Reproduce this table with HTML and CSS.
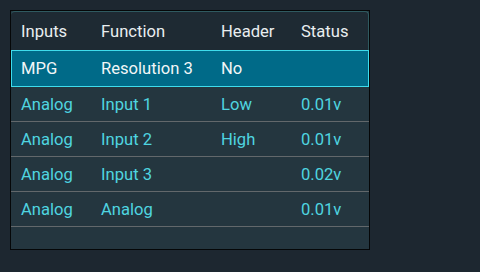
FILE: index.html
```html
<!DOCTYPE html>
<html lang="en">
<head>
    <meta charset="UTF-8">
    <meta name="viewport" content="width=device-width, initial-scale=1.0">
    <title>Inputs</title>
    <link rel="stylesheet" href="styles.css">
</head>
<body>

    <div class="panel">
        <div class="row head">
            <span>Inputs</span>
            <span>Function</span>
            <span>Header</span>
            <span>Status</span>
        </div>
        <div class="row selected">
            <span>MPG</span>
            <span>Resolution 3</span>
            <span>No</span>
            <span></span>
        </div>
        <div class="row">
            <span>Analog</span>
            <span>Input 1</span>
            <span>Low</span>
            <span>0.01v</span>
        </div>
        <div class="row">
            <span>Analog</span>
            <span>Input 2</span>
            <span>High</span>
            <span>0.01v</span>
        </div>
        <div class="row">
            <span>Analog</span>
            <span>Input 3</span>
            <span></span>
            <span>0.02v</span>
        </div>
        <div class="row">
            <span>Analog</span>
            <span>Analog</span>
            <span></span>
            <span>0.01v</span>
        </div>
    </div>

</body>
</html>
```

FILE: styles.css
```css
body {
    margin: 0;
    padding: 10px;
    background-color: #1d2730;
    font-family: Roboto, "Liberation Sans", sans-serif;
    font-size: 16.6px;
}
.panel {
    width: 358px;
    height: 238px;
    border: 1px solid #050708;
    background-color: #24363f;
}
.row {
    display: grid;
    grid-template-columns: 80px 120px 80px 1fr;
    align-items: center;
    height: 34px;
    padding-left: 10px;
    color: #4fd5e0;
    border-bottom: 1px solid #62686b;
}
.head {
    height: 39px;
    color: #e9eef0;
    background-color: #1e2a33;
    border: none;
    border-top: 1px solid #2f5a60;
    border-right: 1px solid #2f5a60;
    border-radius: 4px 4px 0 0;
    box-sizing: border-box;
}
.selected {
    height: 35px;
    padding-left: 9px;
    color: #f2f6f7;
    background-color: #006a88;
    border: 1px solid #3fdcec;
}
```
